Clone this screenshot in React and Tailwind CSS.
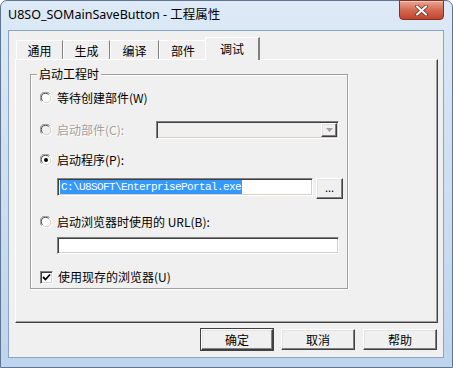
// 工程属性 dialog (Windows 7 basic frame, classic controls)
const cjk = "font-['Noto_Sans_CJK_SC','Noto_Sans',sans-serif]";

const Radio = ({ checked, disabled }) => (
    <svg width="12" height="12" viewBox="0 0 12 12" className="shrink-0">
        <circle cx="6" cy="6" r="5.5" fill={disabled ? "#f0f0f0" : "#fff"} />
        <path d="M1.6 9.5 A5 5 0 0 1 9.5 1.6" fill="none" stroke="#808080" strokeWidth="1" />
        <path d="M2.5 8.6 A3.8 3.8 0 0 1 8.6 2.5" fill="none" stroke="#404040" strokeWidth="1" />
        <path d="M10.4 2.5 A5 5 0 0 1 2.5 10.4" fill="none" stroke="#fff" strokeWidth="1" />
        <path d="M9.5 3.4 A3.8 3.8 0 0 1 3.4 9.5" fill="none" stroke="#d4d0c8" strokeWidth="1" />
        {checked && <circle cx="6" cy="6" r="2" fill="#000" />}
    </svg>
);

const sunken = "border border-t-[#808080] border-l-[#808080] border-b-white border-r-white shadow-[inset_1px_1px_0_#404040,inset_-1px_-1px_0_#d4d0c8]";
const raised = "border border-t-white border-l-white border-b-[#404040] border-r-[#404040] shadow-[inset_-1px_-1px_0_#808080,inset_1px_1px_0_#e3e3e3]";

const Tab = ({ label, active, w }) =>
    active ? (
        <div className="relative z-10 -mb-px h-[23px] w-[55px] -ml-[2px] flex items-start justify-center pt-[2px] bg-[#f0f0f0] border-t border-l border-white border-r-2 border-r-[#808080]">
            {label}
        </div>
    ) : (
        <div className={`h-[19px] ${w} flex items-start justify-center pt-[1px] border-t border-l border-white border-r border-r-[#808080]`}>
            {label}
        </div>
    );

const Btn = ({ children, isDefault, className = "" }) => (
    <div className={`h-[21px] flex items-center justify-center bg-[#f0f0f0] ${isDefault ? "outline outline-1 outline-[#404040]" : ""} ${raised} ${className}`}>
        {children}
    </div>
);

export default function App() {
    return (
        <div className={`w-[453px] h-[368px] relative rounded-t-[7px] border border-[#5f7590] bg-gradient-to-b from-[#dde9f6] via-[#cddff1] to-[#bfd5ed] flex flex-col text-[12px] text-black ${cjk}`}>
            {/* title bar */}
            <div className="h-[29px] flex items-center pl-[7px] font-['Noto_Sans','Noto_Sans_CJK_SC',sans-serif] text-[12.5px]">
                U8SO_SOMainSaveButton - 工程属性
            </div>
            <div className="absolute top-[-1px] right-[8px] w-[45px] h-[20px] rounded-b-[4px] border border-[#7d3326] bg-gradient-to-b from-[#e9a795] via-[#d26a53] to-[#c2412a] flex items-center justify-center shadow-[inset_0_1px_0_#f3c5b8]">
                <svg width="13" height="11" viewBox="0 0 13 11">
                    <path d="M2 1.5 L11 9.5 M11 1.5 L2 9.5" stroke="#5a2018" strokeWidth="3.4" strokeLinecap="round" />
                    <path d="M2 1.5 L11 9.5 M11 1.5 L2 9.5" stroke="#fff" strokeWidth="2.2" strokeLinecap="round" />
                </svg>
            </div>

            {/* client area */}
            <div className="ml-[7px] mr-[8px] mb-[9px] flex-1 bg-[#f0f0f0] border border-[#8aa5c4] flex flex-col pl-[6px] pr-[5px]">
                {/* tabs */}
                <div className="mt-[6px] h-[22px] flex items-end pl-[1px]">
                    <Tab label="通用" w="w-[47px]" />
                    <Tab label="生成" w="w-[47px]" />
                    <Tab label="编译" w="w-[49px]" />
                    <Tab label="部件" w="w-[48px]" />
                    <Tab label="调试" active />
                </div>

                {/* tab panel */}
                <div className="h-[264px] border border-t-white border-l-white border-b-[#404040] border-r-[#404040] shadow-[inset_-1px_-1px_0_#a0a0a0] pl-[14px] pt-[14px]">
                    <div className="relative w-[318px] h-[215px] border border-[#a0a0a0] shadow-[1px_1px_0_#fff,inset_1px_1px_0_#fff] pl-[9px] pt-[15px] flex flex-col">
                        <div className="absolute -top-[9px] left-[6px] px-[2px] bg-[#f0f0f0] leading-[16px]">启动工程时</div>

                        <div className="h-[16px] flex items-center gap-[5px]">
                            <Radio />
                            <span>等待创建部件(W)</span>
                        </div>

                        <div className="mt-[15px] h-[18px] flex items-center">
                            <Radio disabled />
                            <span className="ml-[5px] w-[99px] text-[#a0a0a0] [text-shadow:1px_1px_0_#fff]">启动部件(C):</span>
                            <div className={`w-[183px] h-[18px] bg-[#f0f0f0] flex justify-end items-stretch p-[1px] ${sunken}`}>
                                <div className={`w-[16px] flex items-center justify-center ${raised}`}>
                                    <svg width="7" height="4" viewBox="0 0 7 4">
                                        <path d="M0 0 L7 0 L3.5 4 Z" fill="#a0a0a0" />
                                    </svg>
                                </div>
                            </div>
                        </div>

                        <div className="mt-[13px] h-[16px] flex items-center gap-[5px]">
                            <Radio checked />
                            <span>启动程序(P):</span>
                        </div>

                        <div className="mt-[10px] ml-[17px] flex gap-[3px]">
                            <div className={`w-[256px] h-[18px] bg-white flex items-center pl-[2px] ${sunken}`}>
                                <span className="bg-[#3399ff] text-white font-['Liberation_Mono',monospace] text-[11px] tracking-[-0.6px] leading-[14px] px-[1px]">
                                    C:\U8SOFT\EnterprisePortal.exe
                                </span>
                            </div>
                            <Btn className="w-[27px] h-[18px] text-[11px] leading-none pb-[3px]">...</Btn>
                        </div>

                        <div className="mt-[15px] h-[16px] flex items-center gap-[5px]">
                            <Radio />
                            <span>启动浏览器时使用的 URL(B):</span>
                        </div>

                        <div className={`mt-[7px] ml-[17px] w-[282px] h-[17px] bg-white ${sunken}`} />

                        <div className="mt-[15px] h-[16px] flex items-center gap-[5px]">
                            <div className={`w-[13px] h-[13px] bg-white flex items-center justify-center ${sunken}`}>
                                <svg width="9" height="9" viewBox="0 0 9 9">
                                    <path d="M1 4 L3.5 6.5 L8 1.5" fill="none" stroke="#000" strokeWidth="1.8" />
                                </svg>
                            </div>
                            <span>使用现存的浏览器(U)</span>
                        </div>
                    </div>
                </div>

                {/* dialog buttons */}
                <div className="mt-[6px] flex justify-end gap-[8px] pr-[1px]">
                    <Btn isDefault className="w-[72px]">确定</Btn>
                    <Btn className="w-[74px]">取消</Btn>
                    <Btn className="w-[74px]">帮助</Btn>
                </div>
            </div>
        </div>
    );
}
